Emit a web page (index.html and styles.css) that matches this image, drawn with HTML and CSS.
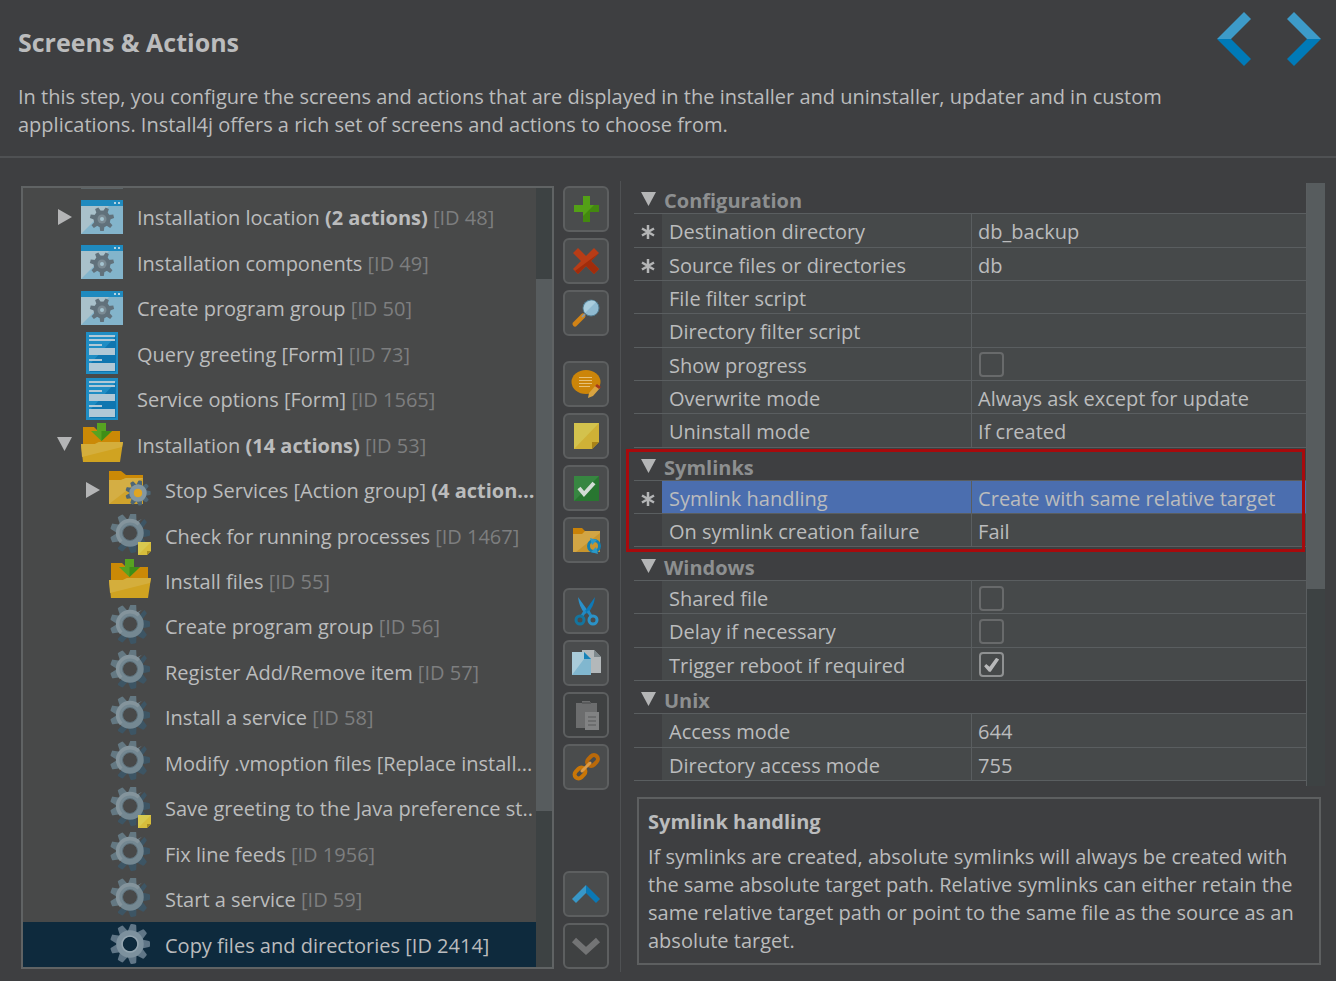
FILE: index.html
```html
<!DOCTYPE html>
<html lang="en">
<head>
<meta charset="utf-8">
<title>Screens &amp; Actions</title>
<link rel="stylesheet" href="styles.css">
</head>
<body>
<svg class="defs" aria-hidden="true">
  <defs>
    <g id="teeth9">
      <path id="tooth" d="M12 -4.5 L19 -3 Q20 -3 20 -1.500 V1.500 Q20 3 19 3 L12 4.500Z"/>
      <use href="#tooth" transform="rotate(40)"/><use href="#tooth" transform="rotate(80)"/>
      <use href="#tooth" transform="rotate(120)"/><use href="#tooth" transform="rotate(160)"/>
      <use href="#tooth" transform="rotate(200)"/><use href="#tooth" transform="rotate(240)"/>
      <use href="#tooth" transform="rotate(280)"/><use href="#tooth" transform="rotate(320)"/>
    </g>
    <clipPath id="upper"><path d="M-21 -21H18L-18 18H-21Z"/></clipPath>
    <clipPath id="lower"><path d="M21 21H-18L18 -18H21Z"/></clipPath>
  </defs>
  <symbol id="gear" viewBox="0 0 42 42">
    <g transform="translate(21 19)">
      <use href="#teeth9" fill="#647882" clip-path="url(#upper)"/>
      <use href="#teeth9" fill="#3d5564" clip-path="url(#lower)"/>
      <circle r="10.500" fill="none" stroke="#748892" stroke-width="6.500"/>
      <path d="M-10 10A14 14 0 0 1 10 -10L7.500 -7.500A10.500 10.500 0 0 0 -7.500 7.500Z" fill="#84949c"/>
      <circle r="7.500" fill="none" stroke="#5c6f79" stroke-width="1"/>
    </g>
  </symbol>
  <symbol id="gear-sel" viewBox="0 0 42 42">
    <g transform="translate(21 21)">
      <use href="#teeth9" fill="#607687"/>
      <circle r="10.500" fill="none" stroke="#7d919e" stroke-width="6.500"/>
      <circle r="8" fill="none" stroke="#94a5b0" stroke-width="1.500"/>
    </g>
  </symbol>
  <symbol id="gear-note" viewBox="0 0 42 42">
    <use href="#gear" width="42" height="42"/>
    <path d="M29 28H42V37L38 41H29Z" fill="#d6bd3c"/>
    <path d="M29 28H42L29 41Z" fill="#d8c94f"/>
    <path d="M42 37H38V41Z" fill="#a98d20"/>
  </symbol>
  <symbol id="window" viewBox="0 0 42 42">
    <path d="M0 4H42V38H0Z" fill="#83b4cb"/>
    <path d="M0 4H34L0 38Z" fill="#a9c1cb"/>
    <path d="M0 4H42V10H0Z" fill="#1f8abf"/>
    <path d="M33 6h2v2h-2zM37 6h2v2h-2z" fill="#b5d3e2"/>
    <g transform="translate(21 23)" fill="#61717b">
      <circle r="8.500"/>
      <path id="wt" d="M-2.500 7H2.500L1.800 12H-1.800Z"/>
      <use href="#wt" transform="rotate(51)"/><use href="#wt" transform="rotate(103)"/>
      <use href="#wt" transform="rotate(154)"/><use href="#wt" transform="rotate(206)"/>
      <use href="#wt" transform="rotate(257)"/><use href="#wt" transform="rotate(309)"/>
      <circle r="4.500" fill="#7b8b94"/><circle r="2" fill="#a5c4d0"/>
    </g>
  </symbol>
  <symbol id="form" viewBox="0 0 42 42">
    <path d="M5 0H37V42H5Z" fill="#1f8dc4"/>
    <path d="M35 4V40H9V32Z" fill="#0f76b0"/>
    <path d="M8 3H34V5H8ZM8 7H34V9H8ZM8 12H21V14H8ZM8 16H34V23H8ZM8 27H21V29H8ZM8 31H34V39H8Z" fill="#b0c8d6"/>
  </symbol>
  <symbol id="install" viewBox="0 0 42 42">
    <path d="M2 4H13L17 8H39V22H2Z" fill="#cb8906"/>
    <path d="M0 21H14L18 19H42L39 39H2Z" fill="#d0a321"/>
    <path d="M0 21H14L18 19H42L41 24L1 34Z" fill="#d4ae3c"/>
    <path d="M16 -2H25V8H31L20.500 18L10 8H16Z" fill="#57a321"/>
    <path d="M20.500 8H31L20.500 18Z" fill="#3f8e17"/>
  </symbol>
  <symbol id="group" viewBox="0 0 42 42">
    <path d="M0 2H12L17 6H34V14H0Z" fill="#cb8906"/>
    <path d="M0 11H12L17 9H34V35H0Z" fill="#d0a32c"/>
    <path d="M0 11H12L17 9H34L0 35Z" fill="#d4ae44"/>
    <g transform="translate(29 24)">
      <use href="#teeth9" fill="#4e6675" transform="scale(.63)"/>
      <circle r="6.500" fill="none" stroke="#8397a1" stroke-width="4.500"/>
      <circle r="4" fill="#e0a524"/>
    </g>
  </symbol>
  <symbol id="down" viewBox="0 0 15 14"><path d="M0 0H15L7.500 14Z" fill="#b4b5b6"/></symbol>
  <symbol id="right" viewBox="0 0 15 16"><path d="M1 0L15 8L1 16Z" fill="#b4b5b6"/></symbol>
  <symbol id="star" viewBox="0 0 14 14"><path d="M7 0V14M1 3.500L13 10.500M13 3.500L1 10.500" stroke="#b4b5b6" stroke-width="2.500"/></symbol>
</svg>

<header class="head">
  <div class="intro">
    <h1>Screens &amp; Actions</h1>
    <p>In this step, you configure the screens and actions that are displayed in the installer and uninstaller, updater and in custom<br>applications. Install4j offers a rich set of screens and actions to choose from.</p>
  </div>
  <nav class="steps">
    <button aria-label="Previous step"><svg width="34" height="54" viewBox="0 0 34 54"><path d="M27 0L34 7L14 27H0Z" fill="#3d9bc9"/><path d="M0 27H14L34 47L27 54Z" fill="#007ab8"/></svg></button>
    <button aria-label="Next step"><svg width="34" height="54" viewBox="0 0 34 54"><path d="M7 0L0 7L20 27H34Z" fill="#3d9bc9"/><path d="M34 27H20L0 47L7 54Z" fill="#007ab8"/></svg></button>
  </nav>
</header>

<main class="work">
  <section class="tree" aria-label="Screens and actions">
    <ul class="rows">
      <li><button class="toggle" aria-label="Expand"><svg width="15" height="16"><use href="#right"/></svg></button><svg class="ico"><use href="#window"/></svg><span>Installation location <b>(2 actions)</b> <i>[ID 48]</i></span></li>
      <li><svg class="ico"><use href="#window"/></svg><span>Installation components <i>[ID 49]</i></span></li>
      <li><svg class="ico"><use href="#window"/></svg><span>Create program group <i>[ID 50]</i></span></li>
      <li><svg class="ico"><use href="#form"/></svg><span>Query greeting [Form] <i>[ID 73]</i></span></li>
      <li><svg class="ico"><use href="#form"/></svg><span>Service options [Form] <i>[ID 1565]</i></span></li>
      <li><button class="toggle" aria-label="Collapse"><svg width="15" height="14"><use href="#down"/></svg></button><svg class="ico"><use href="#install"/></svg><span>Installation <b>(14 actions)</b> <i>[ID 53]</i></span></li>
      <li class="sub"><button class="toggle" aria-label="Expand"><svg width="15" height="16"><use href="#right"/></svg></button><svg class="ico"><use href="#group"/></svg><span>Stop Services [Action group] <b>(4 action...</b></span></li>
      <li class="sub"><svg class="ico"><use href="#gear-note"/></svg><span>Check for running processes <i>[ID 1467]</i></span></li>
      <li class="sub"><svg class="ico"><use href="#install"/></svg><span>Install files <i>[ID 55]</i></span></li>
      <li class="sub"><svg class="ico"><use href="#gear"/></svg><span>Create program group <i>[ID 56]</i></span></li>
      <li class="sub"><svg class="ico"><use href="#gear"/></svg><span>Register Add/Remove item <i>[ID 57]</i></span></li>
      <li class="sub"><svg class="ico"><use href="#gear"/></svg><span>Install a service <i>[ID 58]</i></span></li>
      <li class="sub"><svg class="ico"><use href="#gear"/></svg><span>Modify .vmoption files [Replace install...</span></li>
      <li class="sub"><svg class="ico"><use href="#gear-note"/></svg><span>Save greeting to the Java preference st..</span></li>
      <li class="sub"><svg class="ico"><use href="#gear"/></svg><span>Fix line feeds <i>[ID 1956]</i></span></li>
      <li class="sub"><svg class="ico"><use href="#gear"/></svg><span>Start a service <i>[ID 59]</i></span></li>
      <li class="sub selected"><svg class="ico"><use href="#gear-sel"/></svg><span>Copy files and directories [ID 2414]</span></li>
    </ul>
    <div class="bar tree-bar"><div class="thumb"></div></div>
  </section>

  <div class="tools" role="toolbar" aria-label="Actions">
    <div class="set">
      <button aria-label="Add"><svg viewBox="0 0 30 30"><path d="M12 2H19V11H28V18H19V28H12V18H3V11H12Z" fill="#53a016"/><path d="M28 11V18H19V28H12V22L23 11Z" fill="#43890f"/></svg></button>
      <button aria-label="Delete"><svg viewBox="0 0 30 30"><path d="M7 2L15 10L23 2L28 7L20 15L28 23L23 28L15 20L7 28L2 23L10 15L2 7Z" fill="#b83c16"/><path d="M28 7L20 15L28 23L23 28L15 20L7 28L4 25Z" fill="#a12c0b"/></svg></button>
      <button aria-label="Find"><svg viewBox="0 0 30 30"><path d="M4 26L12 18" stroke="#d18316" stroke-width="5" stroke-linecap="round"/><path d="M11 19L14 16" stroke="#8b969b" stroke-width="2"/><circle cx="20" cy="10" r="8" fill="#8fbad0" stroke="#527b8e" stroke-width="1"/><path d="M14 15A8 8 0 0 1 25 4Z" fill="#a9cddd"/></svg></button>
    </div>
    <div class="set">
      <button aria-label="Comment"><svg viewBox="0 0 30 30"><ellipse cx="15" cy="13" rx="14.500" ry="12" fill="#cc8509"/><path d="M8 8.500H21M8 11.500H21M8 14.500H21M8 17.500H19" stroke="#e6c078" stroke-width="1"/><path d="M17 29L18 24L25 16L29 19L22 27Z" fill="#d9a441"/><path d="M24 17L26 15L30 18L28 20Z" fill="#a5371a"/></svg></button>
      <button aria-label="Note"><svg viewBox="0 0 30 30"><path d="M3 2H28V21L21 28H3Z" fill="#cfb136"/><path d="M3 2H28L3 28Z" fill="#d3c24d"/><path d="M28 21H21V28Z" fill="#a88318"/></svg></button>
      <button aria-label="Validate"><svg viewBox="0 0 30 30"><path d="M3 3H28V28H3Z" fill="#287630"/><path d="M3 3H28L3 28Z" fill="#378641"/><path d="M8 15L13 21L23 10" fill="none" stroke="#d3dcd5" stroke-width="4"/></svg></button>
      <button aria-label="Action group"><svg viewBox="0 0 30 30"><path d="M2 3H11L14 6H29V12H2Z" fill="#c98208"/><path d="M2 9H11L14 6H29V27H2Z" fill="#d2a544"/><path d="M29 8V27H5Z" fill="#c8952d"/><circle cx="23" cy="21" r="5.500" fill="none" stroke="#157fae" stroke-width="3"/><path d="M19 13L26 15L21 20ZM27 29L20 27L25 22Z" fill="#2b99c7"/></svg></button>
    </div>
    <div class="set">
      <button aria-label="Cut"><svg viewBox="0 0 30 30"><path d="M7 1L17 15L14 18Q8 11 7 1Z" fill="#2a91cb"/><path d="M24 1L14 15L16 18Q23 11 24 1Z" fill="#0d79b7"/><path d="M14 15L11 20M17 15L20 20" stroke="#2289c2" stroke-width="3"/><circle cx="9" cy="24" r="4" fill="none" stroke="#14759f" stroke-width="3"/><circle cx="22" cy="24" r="4" fill="none" stroke="#2b92c7" stroke-width="3"/></svg></button>
      <button aria-label="Copy"><svg viewBox="0 0 30 30"><path d="M11 2H23L30 9V25H11Z" fill="#b3b8ba"/><path d="M23 2V9H30Z" fill="#7f898d"/><path d="M1 4H13L20 11V27H1Z" fill="#81b7cf"/><path d="M1 4H13V11L1 27Z" fill="#a9cbd9"/><path d="M13 4V11H20Z" fill="#1782b8"/></svg></button>
      <button class="off" aria-label="Paste" disabled><svg viewBox="0 0 30 30"><path d="M5 3H11V1H19V3H26V28H5Z" fill="#6c6d6e"/><path d="M11 2H20V4H11Z" fill="#5a5b5c"/><path d="M14 12H28V30H14Z" fill="#818283"/><path d="M17 17H25M17 21H25M17 25H25" stroke="#666768" stroke-width="1.500"/></svg></button>
      <button aria-label="Link"><svg viewBox="0 0 30 30"><g fill="none" stroke-width="4"><rect x="-6" y="-4" width="12" height="8" rx="4" transform="translate(9 21) rotate(-45)" stroke="#c97607"/><rect x="-6" y="-4" width="12" height="8" rx="4" transform="translate(21.500 8.500) rotate(-45)" stroke="#b9690a"/><path d="M11 19L19 11" stroke="#dc9b47" stroke-width="3" stroke-linecap="round"/></g></svg></button>
    </div>
    <div class="set last">
      <button aria-label="Move up"><svg viewBox="0 0 30 30"><path d="M15 6V14L5 24L1 20Z" fill="#3897c8"/><path d="M15 6L29 20L25 24L15 14Z" fill="#0a78b5"/></svg></button>
      <button class="off" aria-label="Move down" disabled><svg viewBox="0 0 30 30"><path d="M3 9L15 20L27 9" fill="none" stroke="#737475" stroke-width="6"/></svg></button>
    </div>
  </div>

  <section class="side">
    <div class="props">
      <table>
        <colgroup><col class="c-mark"><col class="c-name"><col></colgroup>
        <tbody>
          <tr class="cat"><th colspan="3"><button><svg width="15" height="14"><use href="#down"/></svg>Configuration</button></th></tr>
          <tr><td><svg class="star"><use href="#star"/></svg></td><th>Destination directory</th><td>db_backup</td></tr>
          <tr><td><svg class="star"><use href="#star"/></svg></td><th>Source files or directories</th><td>db</td></tr>
          <tr><td></td><th>File filter script</th><td></td></tr>
          <tr><td></td><th>Directory filter script</th><td></td></tr>
          <tr><td></td><th><label for="progress">Show progress</label></th><td><input type="checkbox" id="progress"></td></tr>
          <tr><td></td><th>Overwrite mode</th><td>Always ask except for update</td></tr>
          <tr><td></td><th>Uninstall mode</th><td>If created</td></tr>
        </tbody>
        <tbody class="marked">
          <tr class="cat"><th colspan="3"><button><svg width="15" height="14"><use href="#down"/></svg>Symlinks</button></th></tr>
          <tr class="active"><td><svg class="star"><use href="#star"/></svg></td><th>Symlink handling</th><td>Create with same relative target</td></tr>
          <tr><td></td><th>On symlink creation failure</th><td>Fail</td></tr>
        </tbody>
        <tbody>
          <tr class="cat"><th colspan="3"><button><svg width="15" height="14"><use href="#down"/></svg>Windows</button></th></tr>
          <tr><td></td><th><label for="shared">Shared file</label></th><td><input type="checkbox" id="shared"></td></tr>
          <tr><td></td><th><label for="delay">Delay if necessary</label></th><td><input type="checkbox" id="delay"></td></tr>
          <tr><td></td><th><label for="reboot">Trigger reboot if required</label></th><td><input type="checkbox" id="reboot" checked></td></tr>
        </tbody>
        <tbody>
          <tr class="cat"><th colspan="3"><button><svg width="15" height="14"><use href="#down"/></svg>Unix</button></th></tr>
          <tr><td></td><th>Access mode</th><td>644</td></tr>
          <tr><td></td><th>Directory access mode</th><td>755</td></tr>
        </tbody>
      </table>
      <div class="bar props-bar"><div class="thumb"></div></div>
    </div>
    <div class="help">
      <h2>Symlink handling</h2>
      <p>If symlinks are created, absolute symlinks will always be created with<br>the same absolute target path. Relative symlinks can either retain the<br>same relative target path or point to the same file as the source as an<br>absolute target.</p>
    </div>
  </section>
</main>
</body>
</html>
```
FILE: styles.css
```css
* { box-sizing: border-box; }

body {
  margin: 0;
  min-height: 100vh;
  display: flex;
  flex-direction: column;
  background: #3e3f41;
  color: #bbbcbd;
  font: 20px/28px "Open Sans", "Noto Sans", sans-serif;
}

h1, h2, p, ul { margin: 0; padding: 0; }
button { padding: 0; border: 0; background: none; color: inherit; font: inherit; }
svg { display: block; flex: none; }
.defs { position: absolute; width: 0; height: 0; }

.head {
  display: flex;
  justify-content: space-between;
  height: 158px;
  padding: 12px 15px 0 18px;
  border-bottom: 2px solid #4f5153;
  white-space: nowrap;
}
.intro { padding-top: 16px; }
h1 { font-size: 25px; line-height: 28px; margin-bottom: 27px; }
.steps { display: flex; align-items: flex-start; gap: 36px; }

.work {
  flex: 1;
  display: flex;
  padding: 23px 0 9px 21px;
}

.tree {
  flex: 1 1 533px;
  min-width: 0;
  display: flex;
  margin: 5px 9px 3px 0;
  border: 2px solid #606364;
  background: #484949;
}
/* The thin strip at the top is the lower edge of the row scrolled out of view. */
.rows {
  flex: 1;
  min-width: 0;
  display: grid;
  grid-auto-rows: 1fr;
  padding-top: 6px;
  background: linear-gradient(#5d6568, #5d6568) 58px 0 / 42px 1px no-repeat;
  list-style: none;
  white-space: nowrap;
}
.rows li { display: flex; align-items: center; padding-left: 58px; overflow: hidden; }
.rows li.sub { padding-left: 86px; }
.rows .toggle { flex: none; width: 24px; margin-left: -24px; }
.rows span { padding-top: 3px; }
.rows .selected { background: #0e2a3d; }
.rows i { color: #7d7e7f; font-style: normal; }
.ico { width: 42px; height: 42px; margin-right: 14px; overflow: visible; }

.bar { flex: none; background: #3d4243; }
.thumb { background: #575c5e; }
.tree-bar { width: 16px; padding-top: 91px; }
.tree-bar .thumb { height: 532px; }

.tools {
  display: flex;
  flex-direction: column;
  gap: 25px;
  margin: 5px 11px 3px 0;
}
.set { display: grid; gap: 6px; }
.set.last { margin-top: auto; }
.tools button {
  display: grid;
  place-items: center;
  width: 46px;
  height: 46px;
  border: 2px solid #5d5f60;
  border-radius: 6px;
  background: #4a4c4d;
}
.tools button.off { background: #3f4142; }
.tools button svg { width: 30px; height: 30px; }

.side {
  flex: 1 1 716px;
  min-width: 0;
  display: flex;
  flex-direction: column;
  padding-left: 13px;
  border-left: 1px solid #4f5153;
}
.props { flex: 1; display: flex; padding-right: 11px; }
table {
  flex: 1;
  height: 600px;
  table-layout: fixed;
  border-collapse: separate;
  border-spacing: 0;
  line-height: 24px;
}
.c-mark { width: 28px; }
.c-name { width: 46%; }
th, td {
  height: 33px;
  padding: 4px 0 0 7px;
  border-bottom: 1px solid #5a5e60;
  background: #46494a;
  text-align: left;
  font-weight: normal;
  white-space: nowrap;
}
td:first-child { background: #3e3f41; }
td:last-child { border-left: 1px solid #5a5e60; padding-left: 6px; }
.cat th { padding-top: 8px; background: #3e3f41; }
.cat button { display: flex; align-items: center; gap: 8px; color: #8d8f90; font-weight: bold; }
.cat svg { margin-bottom: 4px; }
.active th, .active td:last-child { background: #4b6eaf; }
.star { width: 14px; height: 14px; }
.marked { position: relative; }
.marked::after {
  content: "";
  position: absolute;
  inset: 1px 1px -4px -8px;
  border: 3px solid #a80a0c;
  pointer-events: none;
}
input[type="checkbox"] {
  appearance: none;
  display: grid;
  place-items: center;
  width: 25px;
  height: 25px;
  margin: 0 0 2px 1px;
  border: 2px solid #686a6b;
  border-radius: 4px;
  background: #46494a;
}
input[type="checkbox"]:checked { border-color: #8f9192; }
input[type="checkbox"]:checked::before {
  content: "";
  width: 15px;
  height: 14px;
  background: #b8b9ba;
  clip-path: polygon(0 60%, 14% 44%, 36% 64%, 80% 0, 100% 12%, 44% 100%, 32% 100%);
}
.props-bar { width: 19px; margin-top: 2px; border-left: 1px solid #5a5e60; }
.props-bar .thumb { height: 406px; }

.help {
  margin: 11px 15px 7px 3px;
  padding: 9px 8px 8px 9px;
  border: 2px solid #5d5f60;
  white-space: nowrap;
}
h2 { font-size: 20px; line-height: 28px; margin-bottom: 7px; }
```
